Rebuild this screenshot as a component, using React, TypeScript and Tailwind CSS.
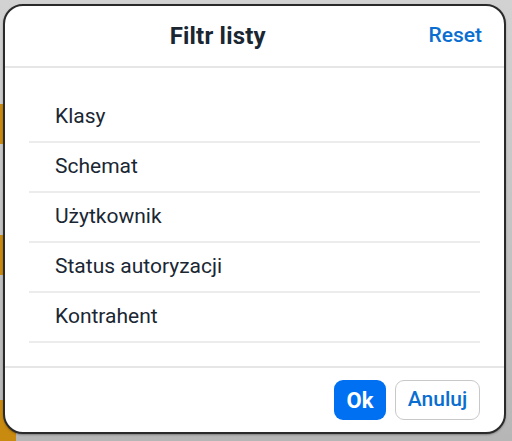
import React from "react";

const items = ["Klasy", "Schemat", "Użytkownik", "Status autoryzacji", "Kontrahent"];

export default function App() {
  return (
    <div
      className="relative w-[512px] h-[441px] overflow-hidden bg-[linear-gradient(#d2d2d2,#b6b6b6)] pl-[3px] pt-[4px]"
      style={{ fontFamily: "Roboto, 'Noto Sans', sans-serif" }}
    >
      {/* background content peeking out behind the dialog */}
      <div className="absolute left-0 top-[104px] w-[6px] h-[40px] bg-[#c98a10]" />
      <div className="absolute left-0 top-[235px] w-[6px] h-[40px] bg-[#c98a10]" />
      <div className="absolute left-0 top-[400px] w-[16px] h-[41px] bg-[#c98a10]" />

      <div className="relative w-[503px] h-[430px] rounded-[20px] border-2 border-[#2a2a2a] bg-white flex flex-col overflow-hidden shadow-[0_1px_2px_rgba(0,0,0,0.3)]">
        <div className="h-[62px] flex items-center border-b-2 border-[#e6e6e6] shrink-0 pl-[2px] pr-[22px]">
          <span className="flex-1 text-center text-[24px] font-bold text-[#1a2733] tracking-[0.2px]">Filtr listy</span>
          <span className="text-[21px] text-[#0a6ed1] font-medium">Reset</span>
        </div>
        <div className="flex-1 px-[24px] pt-[25px]">
          {items.map((t) => (
            <div key={t} className="h-[50px] flex items-center pl-[26px] border-b-2 border-[#ececec] text-[21px] text-[#1a2733]">
              {t}
            </div>
          ))}
        </div>
        <div className="h-[66px] shrink-0 border-t-2 border-[#e6e6e6] flex items-center justify-end gap-[9px] pr-[24px]">
          <button className="h-[40px] w-[52px] rounded-[9px] bg-[#0070f2] text-white text-[22px] font-bold">Ok</button>
          <button className="h-[40px] w-[85px] rounded-[9px] border border-[#c8c8c8] bg-white text-[#0a6ed1] text-[21px] font-medium">Anuluj</button>
        </div>
      </div>
    </div>
  );
}
